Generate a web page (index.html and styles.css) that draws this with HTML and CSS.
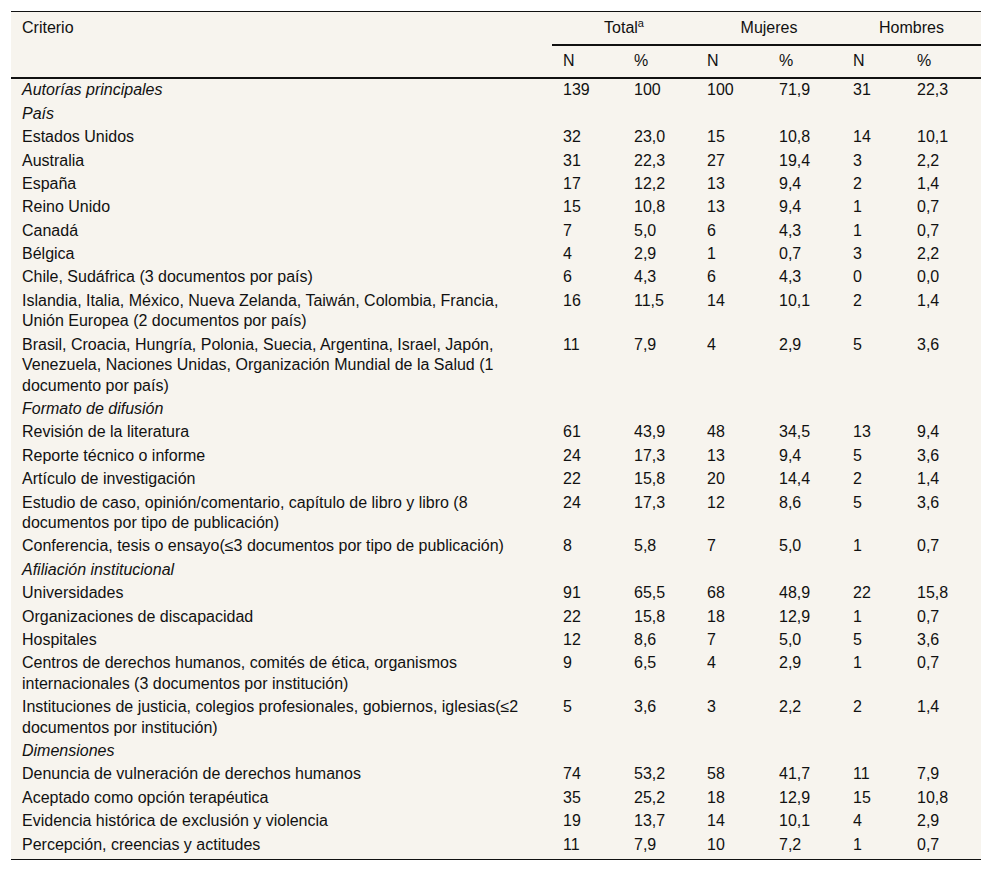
FILE: index.html
```html
<!DOCTYPE html>
<html lang="es">
<head>
<meta charset="utf-8">
<title>Tabla</title>
<link rel="stylesheet" href="styles.css">
</head>
<body>
<div class="wrap">
<table class="data">
  <colgroup>
    <col class="c-crit">
    <col class="c-n1">
    <col class="c-p1">
    <col class="c-n2">
    <col class="c-p2">
    <col class="c-n3">
    <col class="c-p3">
  </colgroup>
  <thead>
    <tr class="h1">
      <th rowspan="2" class="crit">Criterio</th>
      <th colspan="2" class="grp">Total<sup>a</sup></th>
      <th colspan="2" class="grp">Mujeres</th>
      <th colspan="2" class="grp">Hombres</th>
    </tr>
    <tr class="h2">
      <th>N</th><th>%</th><th>N</th><th>%</th><th>N</th><th>%</th>
    </tr>
  </thead>
  <tbody>
    <tr><td class="sec">Autorías principales</td><td>139</td><td>100</td><td>100</td><td>71,9</td><td>31</td><td>22,3</td></tr>
    <tr><td class="sec">País</td><td></td><td></td><td></td><td></td><td></td><td></td></tr>
    <tr><td>Estados Unidos</td><td>32</td><td>23,0</td><td>15</td><td>10,8</td><td>14</td><td>10,1</td></tr>
    <tr><td>Australia</td><td>31</td><td>22,3</td><td>27</td><td>19,4</td><td>3</td><td>2,2</td></tr>
    <tr><td>España</td><td>17</td><td>12,2</td><td>13</td><td>9,4</td><td>2</td><td>1,4</td></tr>
    <tr><td>Reino Unido</td><td>15</td><td>10,8</td><td>13</td><td>9,4</td><td>1</td><td>0,7</td></tr>
    <tr><td>Canadá</td><td>7</td><td>5,0</td><td>6</td><td>4,3</td><td>1</td><td>0,7</td></tr>
    <tr><td>Bélgica</td><td>4</td><td>2,9</td><td>1</td><td>0,7</td><td>3</td><td>2,2</td></tr>
    <tr><td>Chile, Sudáfrica (3 documentos por país)</td><td>6</td><td>4,3</td><td>6</td><td>4,3</td><td>0</td><td>0,0</td></tr>
    <tr><td>Islandia, Italia, México, Nueva Zelanda, Taiwán, Colombia, Francia, Unión Europea (2 documentos por país)</td><td>16</td><td>11,5</td><td>14</td><td>10,1</td><td>2</td><td>1,4</td></tr>
    <tr><td>Brasil, Croacia, Hungría, Polonia, Suecia, Argentina, Israel, Japón, Venezuela, Naciones Unidas, Organización Mundial de la Salud (1 documento por país)</td><td>11</td><td>7,9</td><td>4</td><td>2,9</td><td>5</td><td>3,6</td></tr>
    <tr><td class="sec">Formato de difusión</td><td></td><td></td><td></td><td></td><td></td><td></td></tr>
    <tr><td>Revisión de la literatura</td><td>61</td><td>43,9</td><td>48</td><td>34,5</td><td>13</td><td>9,4</td></tr>
    <tr><td>Reporte técnico o informe</td><td>24</td><td>17,3</td><td>13</td><td>9,4</td><td>5</td><td>3,6</td></tr>
    <tr><td>Artículo de investigación</td><td>22</td><td>15,8</td><td>20</td><td>14,4</td><td>2</td><td>1,4</td></tr>
    <tr><td>Estudio de caso, opinión/comentario, capítulo de libro y libro (8 documentos por tipo de publicación)</td><td>24</td><td>17,3</td><td>12</td><td>8,6</td><td>5</td><td>3,6</td></tr>
    <tr><td>Conferencia, tesis o ensayo(≤3 documentos por tipo de publicación)</td><td>8</td><td>5,8</td><td>7</td><td>5,0</td><td>1</td><td>0,7</td></tr>
    <tr><td class="sec">Afiliación institucional</td><td></td><td></td><td></td><td></td><td></td><td></td></tr>
    <tr><td>Universidades</td><td>91</td><td>65,5</td><td>68</td><td>48,9</td><td>22</td><td>15,8</td></tr>
    <tr><td>Organizaciones de discapacidad</td><td>22</td><td>15,8</td><td>18</td><td>12,9</td><td>1</td><td>0,7</td></tr>
    <tr><td>Hospitales</td><td>12</td><td>8,6</td><td>7</td><td>5,0</td><td>5</td><td>3,6</td></tr>
    <tr><td>Centros de derechos humanos, comités de ética, organismos internacionales (3 documentos por institución)</td><td>9</td><td>6,5</td><td>4</td><td>2,9</td><td>1</td><td>0,7</td></tr>
    <tr><td>Instituciones de justicia, colegios profesionales, gobiernos, iglesias(≤2 documentos por institución)</td><td>5</td><td>3,6</td><td>3</td><td>2,2</td><td>2</td><td>1,4</td></tr>
    <tr><td class="sec">Dimensiones</td><td></td><td></td><td></td><td></td><td></td><td></td></tr>
    <tr><td>Denuncia de vulneración de derechos humanos</td><td>74</td><td>53,2</td><td>58</td><td>41,7</td><td>11</td><td>7,9</td></tr>
    <tr><td>Aceptado como opción terapéutica</td><td>35</td><td>25,2</td><td>18</td><td>12,9</td><td>15</td><td>10,8</td></tr>
    <tr><td>Evidencia histórica de exclusión y violencia</td><td>19</td><td>13,7</td><td>14</td><td>10,1</td><td>4</td><td>2,9</td></tr>
    <tr class="last"><td>Percepción, creencias y actitudes</td><td>11</td><td>7,9</td><td>10</td><td>7,2</td><td>1</td><td>0,7</td></tr>
  </tbody>
</table>
</div>
</body>
</html>
```
FILE: styles.css
```css
html, body {
  margin: 0;
  padding: 0;
  background: #ffffff;
}

.wrap {
  padding: 11px 11px;
}

.data {
  width: 970px;
  table-layout: fixed;
  border-collapse: collapse;
  background: #f7f4ee;
  font-family: "Liberation Sans", Arial, sans-serif;
  font-size: 16px;
  line-height: 20.5px;
  color: #111;
  border-top: 1px solid #111;
  border-bottom: 1px solid #111;
}

.c-crit { width: 541px; }
.c-n1 { width: 71px; }
.c-p1 { width: 73px; }
.c-n2 { width: 72px; }
.c-p2 { width: 74px; }
.c-n3 { width: 64px; }
.c-p3 { width: 75px; }

.data th {
  font-weight: normal;
  text-align: left;
  vertical-align: top;
  padding: 5.5px 11px 5.5px 11px;
}

.data th.crit {
  border-bottom: 2px solid #111;
}

.data th.grp {
  text-align: center;
  border-bottom: 2px solid #111;
}

.data tr.h2 th {
  border-bottom: 2px solid #111;
}

.data sup {
  font-size: 11px;
  line-height: 0;
  vertical-align: 6px;
}

.data td {
  padding: 1.45px 11px 1.45px 11px;
  vertical-align: top;
  text-align: left;
}

.data tr.last td {
  padding-bottom: 4px;
}

.data td.sec {
  font-style: italic;
}
```
